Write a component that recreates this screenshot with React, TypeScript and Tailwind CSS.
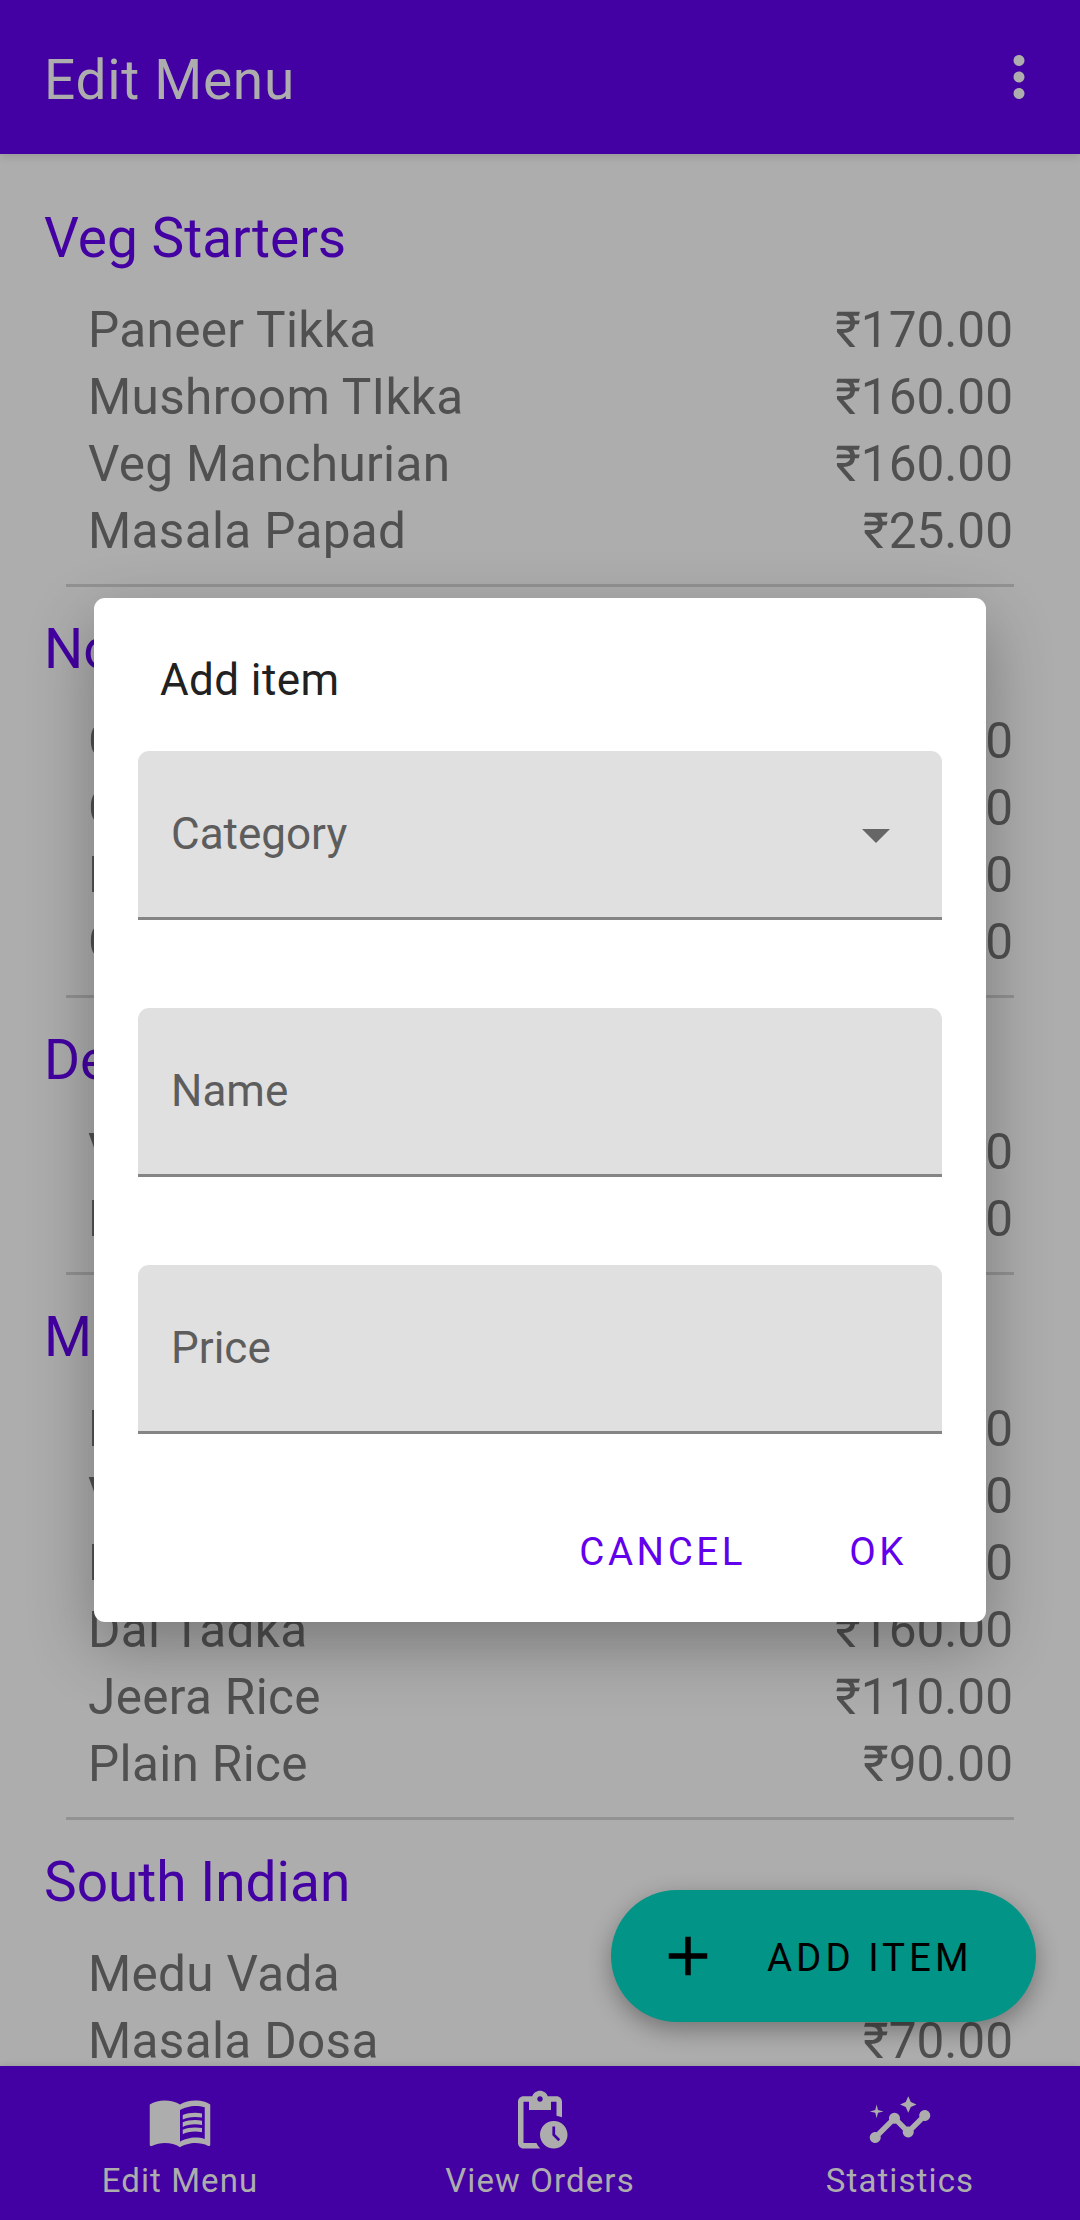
import {
  MdAdd,
  MdInsights,
  MdMenuBook,
  MdMoreVert,
  MdPendingActions,
} from "react-icons/md";
import type { IconType } from "react-icons";

type Section = { title: string; items: [string, string][] };

const sections: Section[] = [
  {
    title: "Veg Starters",
    items: [
      ["Paneer Tikka", "₹170.00"],
      ["Mushroom TIkka", "₹160.00"],
      ["Veg Manchurian", "₹160.00"],
      ["Masala Papad", "₹25.00"],
    ],
  },
  {
    title: "Non Veg Starters",
    items: [
      ["Chicken Tikka", "₹200.00"],
      ["Chicken 65", "₹200.00"],
      ["Fish Fry", "₹220.00"],
      ["Chicken Lollipop", "₹210.00"],
    ],
  },
  {
    title: "Desserts",
    items: [
      ["Vanilla Ice Cream", "₹60.00"],
      ["Rasmalai", "₹80.00"],
    ],
  },
  {
    title: "Main Course",
    items: [
      ["Paneer Masala", "₹180.00"],
      ["Veg Kolhapuri", "₹170.00"],
      ["Dal Fry", "₹150.00"],
      ["Dal Tadka", "₹160.00"],
      ["Jeera Rice", "₹110.00"],
      ["Plain Rice", "₹90.00"],
    ],
  },
  {
    title: "South Indian",
    items: [
      ["Medu Vada", "₹50.00"],
      ["Masala Dosa", "₹70.00"],
    ],
  },
];

function MenuSection({ title, items }: Section) {
  return (
    <section className="shrink-0">
      <h2 className="pl-[44px] text-[55px] leading-[74px] text-[#4300a2]">{title}</h2>
      <ul className="mt-[22px] pr-[67px] pl-[88px] text-[49.5px] leading-[67px] text-[#505050]">
        {items.map(([name, price]) => (
          <li key={name} className="flex justify-between">
            <span className="tracking-[0.33px]">{name}</span>
            <span>{price}</span>
          </li>
        ))}
      </ul>
      <div className="mt-[19px] mr-[66px] mb-[25px] ml-[66px] h-[3px] bg-[#929292]" />
    </section>
  );
}

function Field({ label, dropdown = false }: { label: string; dropdown?: boolean }) {
  return (
    <div className="flex h-[169px] items-center justify-between rounded-t-[11px] border-b-[3px] border-[#858585] bg-[#e0e0e0] pr-[52px] pl-[33px]">
      <span className="text-[44px] leading-[52px] text-[#5d5d5d]">{label}</span>
      {dropdown && (
        <svg width="28" height="14" viewBox="0 0 28 14" className="mt-1">
          <path d="M0 0h28L14 14z" fill="#666666" />
        </svg>
      )}
    </div>
  );
}

function NavItem({ Icon, label }: { Icon: IconType; label: string }) {
  return (
    <div className="flex flex-1 flex-col items-center pt-[22px]">
      <Icon size={66} />
      <span className="mt-[5px] text-[33px] leading-[44px] tracking-[1.1px]">{label}</span>
    </div>
  );
}

export default function App() {
  return (
    <div className="relative flex h-[2220px] w-[1080px] flex-col overflow-hidden bg-[#adadad] font-[Roboto,sans-serif]">
      <header className="z-10 flex h-[154px] shrink-0 items-center justify-between bg-[#4300a2] pr-[28px] pl-[44px] text-[#adadad] shadow-[0_2px_9px_rgba(0,0,0,0.14)]">
        <h1 className="mt-[5px] text-[55px] leading-[74px] tracking-[0.7px]">Edit Menu</h1>
        <MdMoreVert size={66} />
      </header>

      <main className="relative flex min-h-0 flex-1 flex-col overflow-hidden pt-[47px]">
        {sections.map((s) => (
          <MenuSection key={s.title} {...s} />
        ))}
        <button className="absolute right-[44px] bottom-[44px] flex h-[132px] w-[425px] items-center rounded-full bg-[#029486] pl-[44px] text-black shadow-[0_8px_24px_rgba(0,0,0,0.33)]">
          <MdAdd size={66} />
          <span className="mt-1 ml-[46px] text-[38.5px] leading-[46px] tracking-[4px]">ADD ITEM</span>
        </button>
      </main>

      <nav className="z-10 flex h-[154px] shrink-0 bg-[#4300a2] text-[#adadad] shadow-[0_-1px_6px_rgba(0,0,0,0.1)]">
        <NavItem Icon={MdMenuBook} label="Edit Menu" />
        <NavItem Icon={MdPendingActions} label="View Orders" />
        <NavItem Icon={MdInsights} label="Statistics" />
      </nav>

      <div className="absolute inset-0 z-20 flex items-center justify-center">
        <div
          role="dialog"
          className="flex h-[1024px] w-[892px] flex-col rounded-[11px] bg-white px-[44px] pt-[56px] shadow-[0_24px_66px_rgba(0,0,0,0.3)]"
        >
          <h2 className="pl-[22px] text-[44px] leading-[52px] tracking-[0.4px] text-[#212121]">Add item</h2>
          <div className="mt-[45px] flex flex-col gap-[88px]">
            <Field label="Category" dropdown />
            <Field label="Name" />
            <Field label="Price" />
          </div>
          <div className="mt-[95px] flex justify-end gap-[103px] pr-[35px] text-[38.5px] leading-[46px] tracking-[3.6px] text-[#6200ee]">
            <button>CANCEL</button>
            <button>OK</button>
          </div>
        </div>
      </div>
    </div>
  );
}
